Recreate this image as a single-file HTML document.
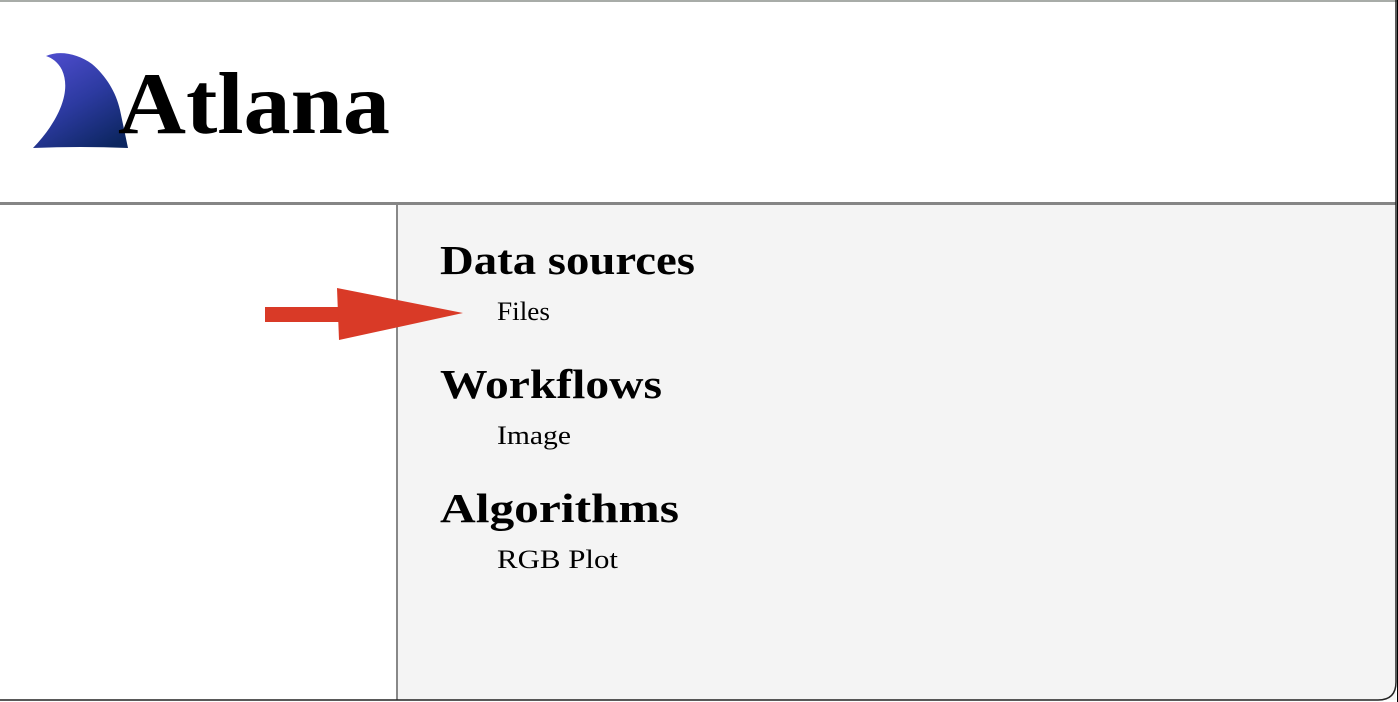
<!DOCTYPE html>
<html><head><meta charset="utf-8"><style>
html,body{margin:0;padding:0;width:1398px;height:702px;overflow:hidden;background:#fff}
</style></head><body>
<svg width="1398" height="702" viewBox="0 0 1398 702" xmlns="http://www.w3.org/2000/svg" font-family="'Liberation Serif', serif">
<defs>
<linearGradient id="g" x1="0.2" y1="0" x2="0.8" y2="1">
<stop offset="0" stop-color="#4d4ccc"/><stop offset="0.5" stop-color="#2c3aa0"/><stop offset="1" stop-color="#0c2660"/>
</linearGradient>
</defs>
<rect x="0" y="0" width="1398" height="702" fill="#fff"/>
<rect x="0" y="0" width="1398" height="2" fill="#a8aca8"/>
<!-- main area -->
<rect x="397" y="205" width="999" height="495" fill="#f4f4f4"/>
<rect x="0" y="202" width="1396" height="3" fill="#858585"/>
<rect x="396" y="205" width="2" height="495" fill="#888"/>
<!-- right & bottom border -->
<path d="M1396,0 L1396,682 Q1396,700 1378,700 L0,700" fill="none" stroke="#222" stroke-width="1.5"/>
<rect x="1397" y="0" width="1" height="702" fill="#000"/>
<!-- logo -->
<path d="M33,148 C58,122 72,92 62,70 C58,62 52,58 46,56 C60,50 78,54 92,64 C106,76 116,92 120,110 L128,148 Q80,146 33,148 Z" fill="url(#g)"/>
<text x="118" y="133" font-size="88" font-weight="bold" fill="#000" textLength="272" lengthAdjust="spacingAndGlyphs">Atlana</text>
<!-- arrow -->
<rect x="265" y="307" width="75" height="15" fill="#d93a27"/>
<polygon points="337,288 463,313 339,340" fill="#d93a27"/>
<!-- menu -->
<g fill="#000">
<text x="440" y="274" font-size="41" font-weight="bold" textLength="255" lengthAdjust="spacingAndGlyphs">Data sources</text>
<text x="497" y="320" font-size="26" textLength="53" lengthAdjust="spacingAndGlyphs">Files</text>
<text x="440" y="398" font-size="41" font-weight="bold" textLength="222" lengthAdjust="spacingAndGlyphs">Workflows</text>
<text x="497" y="444" font-size="26" textLength="74" lengthAdjust="spacingAndGlyphs">Image</text>
<text x="440" y="522" font-size="41" font-weight="bold" textLength="239" lengthAdjust="spacingAndGlyphs">Algorithms</text>
<text x="497" y="568" font-size="26" textLength="121" lengthAdjust="spacingAndGlyphs">RGB Plot</text>
</g>
</svg>
</body></html>
